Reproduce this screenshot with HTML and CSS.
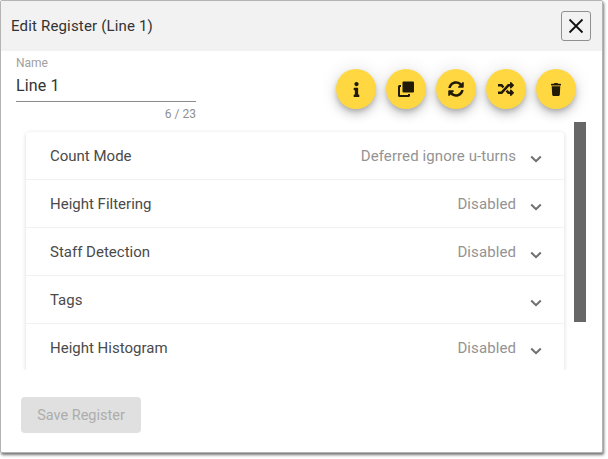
FILE: index.html
```html
<!DOCTYPE html>
<html lang="en">
<head>
<meta charset="utf-8">
<title>Edit Register</title>
<link rel="stylesheet" href="styles.css">
</head>
<body>
<div class="dialog">
  <header class="header">
    <h1 class="title">Edit Register (Line 1)</h1>
    <button class="close" aria-label="Close">
      <svg width="16" height="16" viewBox="0 0 16 16"><path d="M1.500 1.500l13 13M14.500 1.500l-13 13" fill="none" stroke="#111" stroke-width="1.800"/></svg>
    </button>
  </header>
  <div class="top">
    <div class="field">
      <div class="label">Name</div>
      <div class="value">Line 1</div>
      <div class="counter">6 / 23</div>
    </div>
    <div class="actions">
      <button class="fab" aria-label="Info"><svg class="ico" width="7" height="15" viewBox="0 0 192 512"><path d="M20 424.229h20V279.771H20c-11.046 0-20-8.954-20-20V212c0-11.046 8.954-20 20-20h112c11.046 0 20 8.954 20 20v212.229h20c11.046 0 20 8.954 20 20V492c0 11.046-8.954 20-20 20H20c-11.046 0-20-8.954-20-20v-47.771c0-11.046 8.954-20 20-20zM96 0C56.235 0 24 32.235 24 72s32.235 72 72 72 72-32.235 72-72S135.764 0 96 0z"/></svg></button>
      <button class="fab" aria-label="Copy"><svg class="ico" width="16" height="16" viewBox="0 0 16 16"><path d="M4.500 1.600A1.100 1.100 0 0 1 5.600 .5h9.300A1.100 1.100 0 0 1 16 1.600v8.800a1.100 1.100 0 0 1-1.100 1.100H5.600a1.100 1.100 0 0 1-1.100-1.100z"/><path d="M0 5.600A1.600 1.600 0 0 1 1.600 4H3v2H2v8h8v-1h2v1.400a1.600 1.600 0 0 1-1.600 1.600H1.600A1.600 1.600 0 0 1 0 14.400z"/></svg></button>
      <button class="fab" aria-label="Refresh"><svg class="ico" width="16" height="16" viewBox="0 0 512 512"><path d="M370.72 133.28C339.458 104.008 298.888 87.962 255.848 88c-77.458.068-144.328 53.178-162.791 126.85-1.344 5.363-6.122 9.15-11.651 9.15H24.103c-7.498 0-13.194-6.807-11.807-14.176C33.933 94.924 134.813 8 256 8c66.448 0 126.791 26.136 171.315 68.685L463.03 40.97C478.149 25.851 504 36.559 504 57.941V192c0 13.255-10.745 24-24 24H345.941c-21.382 0-32.09-25.851-16.971-40.971l41.75-41.749zM32 296h134.059c21.382 0 32.09 25.851 16.971 40.971l-41.75 41.75c31.262 29.273 71.835 45.319 114.876 45.28 77.418-.07 144.315-53.144 162.787-126.849 1.344-5.363 6.122-9.15 11.651-9.15h57.304c7.498 0 13.194 6.807 11.807 14.176C478.067 417.076 377.187 504 256 504c-66.448 0-126.791-26.136-171.315-68.685L48.97 471.03C33.851 486.149 8 475.441 8 454.059V320c0-13.255 10.745-24 24-24z"/></svg></button>
      <button class="fab" aria-label="Shuffle"><svg class="ico" width="16" height="16" viewBox="0 0 512 512"><path d="M504.971 359.029c9.373 9.373 9.373 24.569 0 33.941l-80 79.984c-15.01 15.01-40.971 4.49-40.971-16.971V416h-58.785a12.004 12.004 0 0 1-8.773-3.812l-70.556-75.596 53.333-57.143L352 336h32v-39.981c0-21.438 25.943-31.998 40.971-16.971l80 79.981zM12 176h84l52.781 56.551 53.333-57.143-70.556-75.596A11.999 11.999 0 0 0 122.785 96H12c-6.627 0-12 5.373-12 12v56c0 6.627 5.373 12 12 12zm372 0v39.984c0 21.46 25.961 31.98 40.971 16.971l80-79.984c9.373-9.373 9.373-24.569 0-33.941l-80-79.981C409.943 24.021 384 34.582 384 56.019V96h-58.785a12.004 12.004 0 0 0-8.773 3.812L96 336H12c-6.627 0-12 5.373-12 12v56c0 6.627 5.373 12 12 12h110.785c3.326 0 6.503-1.381 8.773-3.812L352 176h32z"/></svg></button>
      <button class="fab" aria-label="Delete"><svg class="ico" width="10" height="13" viewBox="0 0 448 512" preserveAspectRatio="none"><path d="M432 32H312l-9.4-18.7A24 24 0 0 0 281.1 0H166.8a23.72 23.72 0 0 0-21.4 13.3L136 32H16A16 16 0 0 0 0 48v32a16 16 0 0 0 16 16h416a16 16 0 0 0 16-16V48a16 16 0 0 0-16-16zM53.2 467a48 48 0 0 0 47.9 45h245.8a48 48 0 0 0 47.9-45L416 128H32z"/></svg></button>
    </div>
  </div>
  <div class="scroller">
    <div class="panels">
      <div class="row"><span class="name">Count Mode</span><span class="state">Deferred ignore u-turns</span><svg class="chev" width="12" height="8" viewBox="0 0 12 8"><path d="M1.200 1.500L6 6.200l4.800-4.700"/></svg></div>
      <div class="row"><span class="name">Height Filtering</span><span class="state">Disabled</span><svg class="chev" width="12" height="8" viewBox="0 0 12 8"><path d="M1.200 1.500L6 6.200l4.800-4.700"/></svg></div>
      <div class="row"><span class="name">Staff Detection</span><span class="state">Disabled</span><svg class="chev" width="12" height="8" viewBox="0 0 12 8"><path d="M1.200 1.500L6 6.200l4.800-4.700"/></svg></div>
      <div class="row"><span class="name">Tags</span><span class="state"></span><svg class="chev" width="12" height="8" viewBox="0 0 12 8"><path d="M1.200 1.500L6 6.200l4.800-4.700"/></svg></div>
      <div class="row"><span class="name">Height Histogram</span><span class="state">Disabled</span><svg class="chev" width="12" height="8" viewBox="0 0 12 8"><path d="M1.200 1.500L6 6.200l4.800-4.700"/></svg></div>
    </div>
    <div class="thumb"></div>
  </div>
  <div class="footer">
    <button class="save" disabled>Save Register</button>
  </div>
</div>
</body>
</html>
```
FILE: styles.css
```css
* { box-sizing: border-box; }
html, body { margin: 0; padding: 0; background: #fff; overflow: hidden; }
body { font-family: Roboto, "Liberation Sans", sans-serif; width: 608px; height: 459px; }
button { font-family: inherit; padding: 0; }

.dialog {
  width: 603px;
  height: 453px;
  background: #fff;
  border: 1px solid #b4b4b4;
  border-radius: 2px;
  box-shadow: 1px 2px 3px rgba(0, 0, 0, .55);
  display: flex;
  flex-direction: column;
  overflow: hidden;
}

.header {
  height: 50px;
  flex: none;
  background: #f2f2f2;
  display: flex;
  align-items: center;
  justify-content: space-between;
  padding: 0 11px 0 10px;
}
.title { margin: 0; font-size: 15px; font-weight: 400; letter-spacing: .17px; color: #333; }
.close {
  width: 30px;
  height: 30px;
  margin-top: -1px;
  background: #f2f2f2;
  border: 1px solid #8f8f8f;
  border-radius: 3px;
  display: flex;
  align-items: center;
  justify-content: center;
}

.top {
  height: 71px;
  flex: none;
  display: flex;
  justify-content: space-between;
  padding: 0 26px 0 15px;
}
.field { width: 180px; }
.label { font-size: 12px; line-height: 14px; height: 19px; padding-top: 5px; color: #a0a0a0; }
.value {
  font-size: 16px;
  line-height: 24px;
  height: 32px;
  padding-top: 4px;
  letter-spacing: .15px;
  color: #333;
  border-bottom: 1px solid #8c8c8c;
}
.counter { font-size: 12px; line-height: 14px; padding-top: 5px; text-align: right; color: #8f8f8f; }

.actions { display: flex; gap: 10px; padding-top: 18px; align-items: flex-start; }
.fab {
  width: 40px;
  height: 40px;
  border: 0;
  border-radius: 50%;
  background: #ffd740;
  box-shadow: 0 3px 5px -1px rgba(0, 0, 0, .2), 0 6px 10px 0 rgba(0, 0, 0, .14), 0 1px 18px 0 rgba(0, 0, 0, .12);
  display: flex;
  align-items: center;
  justify-content: center;
}
.ico { fill: #211a06; display: block; }

.scroller {
  height: 248px;
  flex: none;
  display: flex;
  align-items: flex-start;
  gap: 10px;
  padding-left: 25px;
  overflow: hidden;
}
.panels {
  width: 538px;
  flex: none;
  margin-top: 10px;
  background: #fff;
  border-radius: 4px;
  box-shadow: 0 1px 4px rgba(0, 0, 0, .16);
}
.row {
  height: 48px;
  display: flex;
  align-items: center;
  padding: 0 22px 0 24px;
  font-size: 15px;
  border-bottom: 1px solid #f1f1f1;
}
.name { color: #4a4a4a; flex: 1; }
.state { color: #939393; margin-right: 14px; letter-spacing: .09px; }
.chev { flex: none; margin-top: 7px; fill: none; stroke: #6e6e6e; stroke-width: 2; }
.thumb { width: 12px; height: 200px; flex: none; background: #676767; }

.footer { flex: 1; padding: 27px 20px 0; }
.save {
  width: 120px;
  height: 36px;
  border: 0;
  border-radius: 4px;
  background: #e0e0e0;
  color: #adadad;
  font-size: 14.5px;
}
```
